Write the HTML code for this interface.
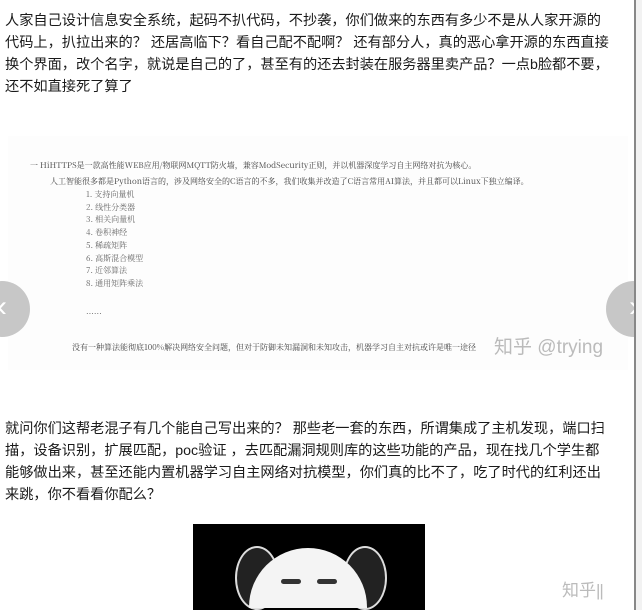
<!DOCTYPE html>
<html><head><meta charset="utf-8"><style>
html,body{margin:0;width:642px;height:610px;overflow:hidden}
body{background:#fff;position:relative;font-family:"Liberation Sans","Noto Sans CJK SC",sans-serif;color:#1a1a1a}
.p{position:absolute;left:5px;font-size:14.2px;line-height:22px;white-space:nowrap;letter-spacing:0}
.sb{position:absolute;left:634px;top:0;width:8px;height:610px;background:#f2f2f2;border-left:2px solid #888}
.img{position:absolute;left:8px;top:136px;width:620px;height:234px;background:#fdfdfd;color:#666;font-family:"Noto Serif CJK SC",serif;font-size:8px;overflow:hidden}
.img div{position:absolute;white-space:nowrap}
.nav{position:absolute;top:281px;width:56px;height:56px;border-radius:50%;background:rgba(180,180,180,.75);color:#fff;font-size:30px;line-height:52px;text-align:center}
.panda{position:absolute;left:193px;top:524px;width:232px;height:86px;background:#000;overflow:hidden}
</style></head><body>
<div class="p" style="top:10px">人家自己设计信息安全系统，起码不扒代码，不抄袭，你们做来的东西有多少不是从人家开源的<br>代码上，扒拉出来的？ 还居高临下？看自己配不配啊？ 还有部分人，真的恶心拿开源的东西直接<br>换个界面，改个名字，就说是自己的了，甚至有的还去封装在服务器里卖产品？一点b脸都不要，<br>还不如直接死了算了</div>
<div class="img">
<div style="left:22px;top:24px;color:#444">一 HiHTTPS是一款高性能WEB应用/物联网MQTT防火墙，兼容ModSecurity正则，并以机器深度学习自主网络对抗为核心。</div>
<div style="left:42px;top:40px;color:#444">人工智能很多都是Python语言的，涉及网络安全的C语言的不多，我们收集并改造了C语言常用AI算法，并且都可以Linux下独立编译。</div>
<div style="left:78px;top:53px;line-height:12.7px">1. 支持向量机<br>2. 线性分类器<br>3. 相关向量机<br>4. 卷积神经<br>5. 稀疏矩阵<br>6. 高斯混合模型<br>7. 近邻算法<br>8. 通用矩阵乘法</div>
<div style="left:78px;top:170px">......</div>
<div style="left:64px;top:206px;color:#444">没有一种算法能彻底100%解决网络安全问题，但对于防御未知漏洞和未知攻击，机器学习自主对抗或许是唯一途径</div>
<div style="left:486px;top:196px;font-family:'Liberation Sans','Noto Sans CJK SC',sans-serif;font-size:19px;color:#bbb">知乎 @trying</div>
</div>
<div class="nav" style="left:-26px">‹</div>
<div class="nav" style="left:606px">›</div>
<div class="p" style="top:418px">就问你们这帮老混子有几个能自己写出来的？ 那些老一套的东西，所谓集成了主机发现，端口扫<br>描，设备识别，扩展匹配，poc验证 ，去匹配漏洞规则库的这些功能的产品，现在找几个学生都<br>能够做出来，甚至还能内置机器学习自主网络对抗模型，你们真的比不了，吃了时代的红利还出<br>来跳，你不看看你配么？</div>
<div class="panda">
<div style="position:absolute;left:42px;top:22px;width:40px;height:60px;border-radius:50%;background:#222;border:2px solid #ddd"></div>
<div style="position:absolute;left:150px;top:22px;width:40px;height:60px;border-radius:50%;background:#222;border:2px solid #ddd"></div>
<div style="position:absolute;left:56px;top:24px;width:118px;height:60px;border-radius:59px 59px 0 0;background:#f4f4f4"></div>
<div style="position:absolute;left:88px;top:55px;width:20px;height:5px;background:#333;border-radius:3px"></div>
<div style="position:absolute;left:124px;top:55px;width:20px;height:5px;background:#333;border-radius:3px"></div>
</div>
<div style="position:absolute;left:562px;top:576px;font-size:17px;color:#bbb">知乎<span style="letter-spacing:-1px">||</span></div>
<div class="sb"></div>
</body></html>
